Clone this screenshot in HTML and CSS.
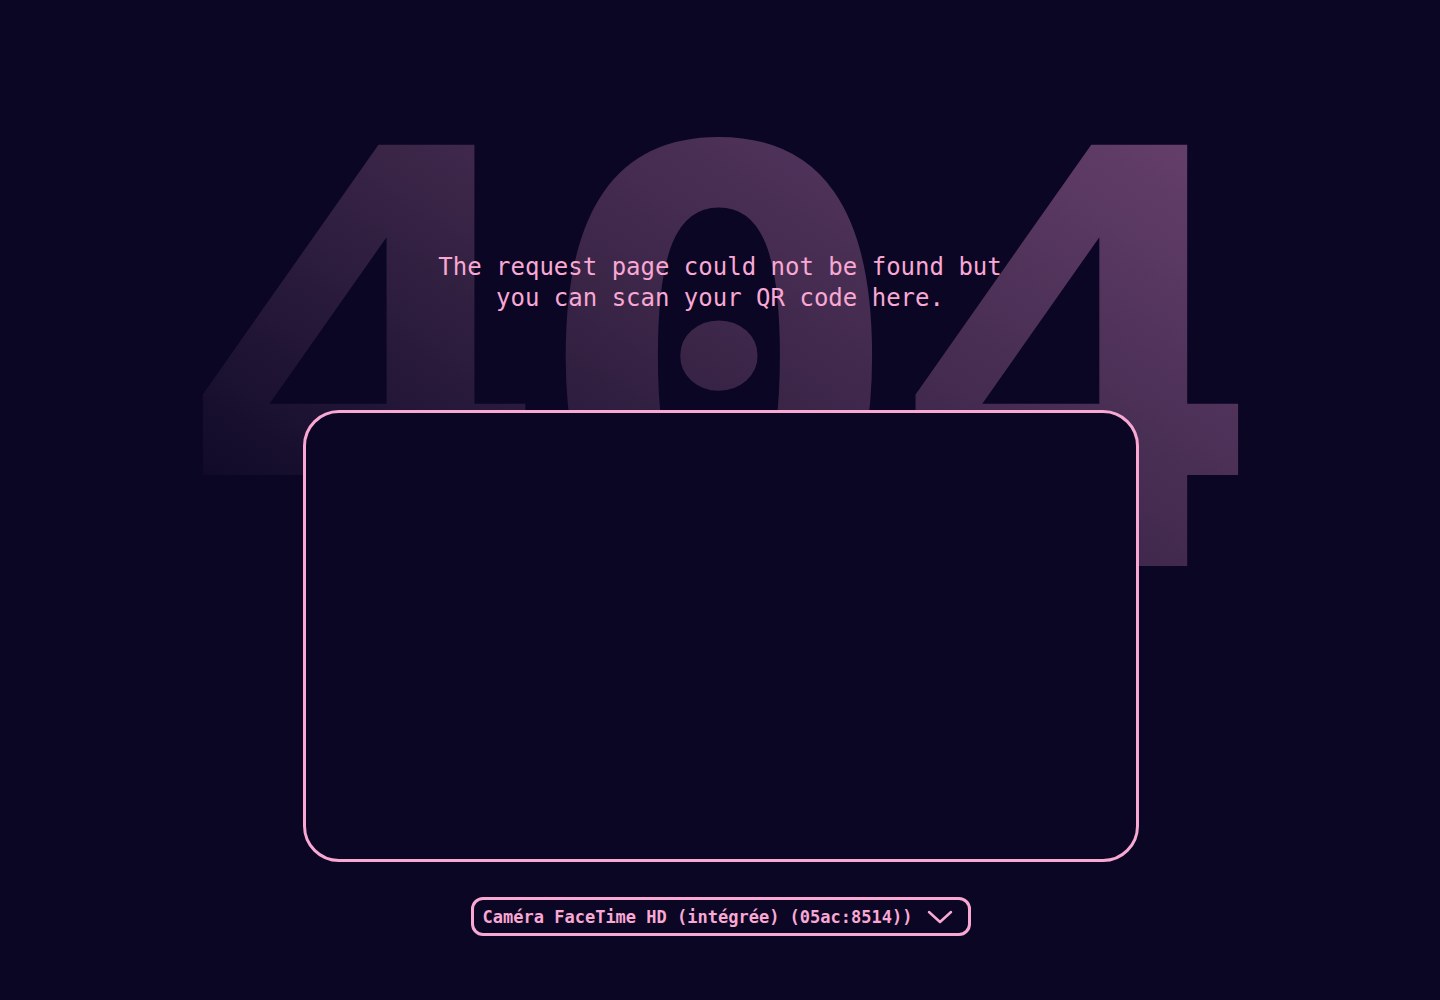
FILE: index.html
```html
<!DOCTYPE html>
<html lang="en">
<head>
<meta charset="utf-8">
<title>404</title>
<link rel="stylesheet" href="styles.css">
</head>
<body>
  <div class="backdrop" aria-hidden="true">404</div>
  <main class="page">
    <p class="message">The request page could not be found but you can scan your QR code here.</p>
    <div class="scanner"></div>
    <div class="camera-select">
      <span class="camera-label">Caméra FaceTime HD (intégrée) (05ac:8514))</span>
      <svg class="chevron" width="26" height="14" viewBox="0 0 26 14" aria-hidden="true">
        <polyline points="2,2 13,12 24,2" fill="none" stroke="#f9a8d4" stroke-width="2.5" stroke-linecap="round" stroke-linejoin="round"/>
      </svg>
    </div>
  </main>
</body>
</html>
```
FILE: styles.css
```css
html, body {
  margin: 0;
  padding: 0;
  height: 100%;
}

body {
  background: #0a0624;
  color: #f9a8d4;
  font-family: "DejaVu Sans Mono", "Liberation Mono", monospace;
  overflow: hidden;
  position: relative;
}

.backdrop {
  position: absolute;
  top: 77px;
  left: 0;
  right: 0;
  text-align: center;
  font-size: 578px;
  line-height: 1;
  font-weight: bold;
  letter-spacing: -24px;
  text-indent: -26px;
  transform: scaleX(1.1);
  transform-origin: 720px 50%;
  background: linear-gradient(35deg, #0a0624 18%, #3a2547 50%, #66406c 85%);
  -webkit-background-clip: text;
  background-clip: text;
  color: transparent;
  z-index: 0;
  user-select: none;
}

.page {
  position: relative;
  z-index: 1;
  display: flex;
  flex-direction: column;
  align-items: center;
  padding-top: 252px;
}

.message {
  margin: 0;
  max-width: 600px;
  text-align: center;
  font-size: 24px;
  line-height: 31px;
  color: #f9a8d4;
}

.scanner {
  margin-top: 96px;
  margin-left: 2px;
  width: 830px;
  height: 446px;
  border: 3px solid #f9a8d4;
  border-radius: 36px;
  background: #0a0624;
}

.camera-select {
  margin-top: 35px;
  margin-left: 2px;
  display: flex;
  align-items: center;
  gap: 15px;
  height: 33px;
  padding: 0 15px 0 9px;
  border: 3px solid #f9a8d4;
  border-radius: 12px;
  background: #0a0624;
}

.camera-label {
  font-size: 17px;
  font-weight: bold;
  color: #f9a8d4;
  white-space: nowrap;
}

.chevron {
  display: block;
}
```
